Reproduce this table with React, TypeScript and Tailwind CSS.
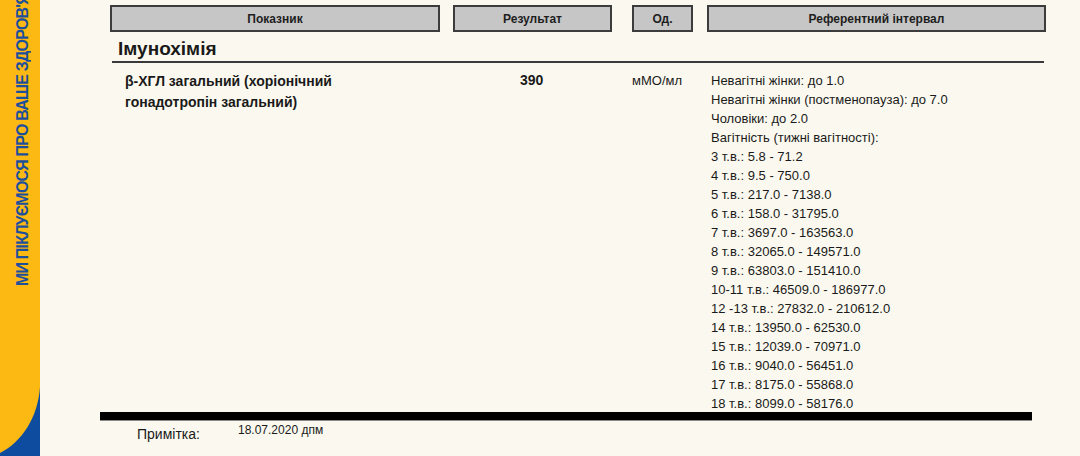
const refs = [
  'Невагітні жінки: до 1.0',
  'Невагітні жінки (постменопауза): до 7.0',
  'Чоловіки: до 2.0',
  'Вагітність (тижні вагітності):',
  '3 т.в.: 5.8 - 71.2',
  '4 т.в.: 9.5 - 750.0',
  '5 т.в.: 217.0 - 7138.0',
  '6 т.в.: 158.0 - 31795.0',
  '7 т.в.: 3697.0 - 163563.0',
  '8 т.в.: 32065.0 - 149571.0',
  '9 т.в.: 63803.0 - 151410.0',
  '10-11 т.в.: 46509.0 - 186977.0',
  '12 -13 т.в.: 27832.0 - 210612.0',
  '14 т.в.: 13950.0 - 62530.0',
  '15 т.в.: 12039.0 - 70971.0',
  '16 т.в.: 9040.0 - 56451.0',
  '17 т.в.: 8175.0 - 55868.0',
  '18 т.в.: 8099.0 - 58176.0',
];

function HeaderBox({ label, className }: { label: string; className: string }) {
  return (
    <div
      className={`h-[27px] flex items-center justify-center border-2 border-[#3c3c3c] bg-[#c6c6c6] text-[12px] font-bold text-[#1e1e1e] ${className}`}
    >
      {label}
    </div>
  );
}

export default function App() {
  return (
    <div
      className="flex w-[1080px] h-[456px] overflow-hidden bg-[#fbf9ef] text-[#1a1a1a]"
      style={{ fontFamily: '"Liberation Sans", Arial, sans-serif' }}
    >
      {/* side band */}
      <div className="w-[40px] h-full flex flex-col bg-[#fcb813] flex-shrink-0">
        <div className="h-[286px] w-full flex justify-center pl-[6px] overflow-hidden">
          <div className="[writing-mode:vertical-rl] rotate-180 whitespace-nowrap text-[16px] tracking-[-0.8px] font-bold text-[#1c4f9c] leading-[30px] overflow-hidden h-[286px]">
            МИ ПІКЛУЄМОСЯ ПРО ВАШЕ ЗДОРОВ'Я
          </div>
        </div>
        <div className="flex-1" />
        <svg width="40" height="69" viewBox="0 0 40 69" className="block">
          <path d="M40 0 C38 30 22 55 0 66 L0 69 L40 69 Z" fill="#0d4c9e" />
        </svg>
      </div>

      {/* report */}
      <div className="flex-1 pt-[5px]">
        <div className="flex pl-[70px]">
          <HeaderBox label="Показник" className="w-[330px]" />
          <HeaderBox label="Результат" className="w-[159px] ml-[13px]" />
          <HeaderBox label="Од." className="w-[61px] ml-[20px]" />
          <HeaderBox label="Референтний інтервал" className="w-[339px] ml-[14px]" />
        </div>

        <div className="ml-[72px] w-[932px] mt-[6px] border-b-2 border-[#3a3a3a] pl-[6px] pb-[1px]">
          <div className="text-[19px] font-bold leading-[22px]">Імунохімія</div>
        </div>

        <div className="flex pt-[8px] h-[349px]">
          <div className="ml-[85px] w-[395px] text-[14px] font-bold leading-[21px]">
            β-ХГЛ загальний (хоріонічний
            <br />
            гонадотропін загальний)
          </div>
          <div className="w-[112px] text-[14px] font-bold leading-[19px]">390</div>
          <div className="w-[79px] text-[13px] leading-[19px]">мМО/мл</div>
          <div className="text-[13px] leading-[19px]">
            {refs.map((r) => (
              <div key={r}>{r}</div>
            ))}
          </div>
        </div>

        <div className="ml-[60px] w-[932px] h-[9px] bg-black border-b border-[#888]" />

        <div className="flex items-start pl-[97px]">
          <div className="w-[101px] text-[14px] pt-[3px]">Примітка:</div>
          <div className="text-[12px]">18.07.2020 дпм</div>
        </div>
      </div>
    </div>
  );
}
